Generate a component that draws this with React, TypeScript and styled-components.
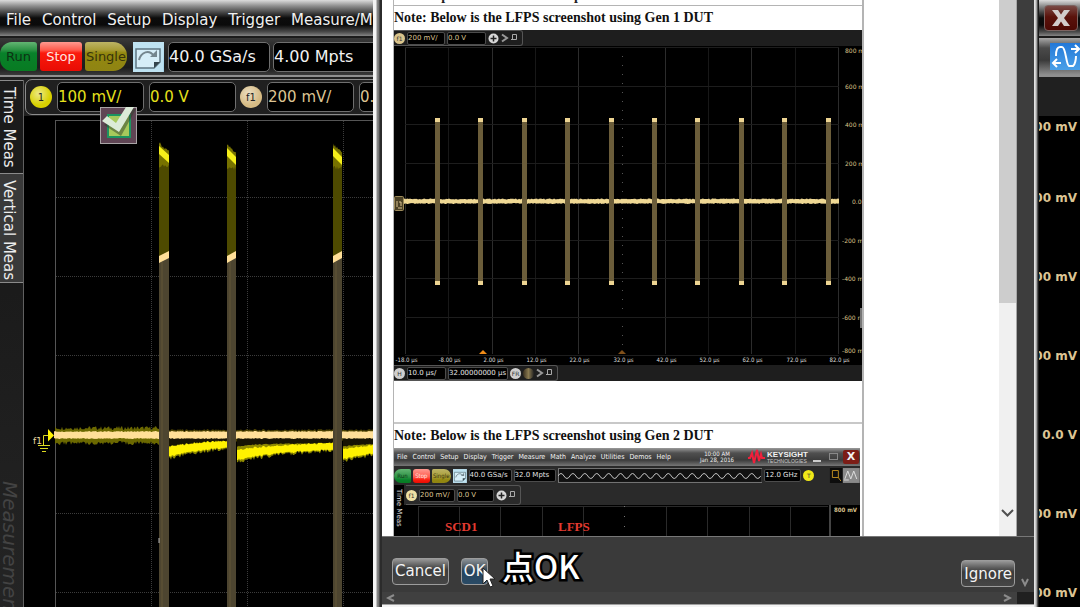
import React from "react";
import styled, { createGlobalStyle, css } from "styled-components";

const Global = createGlobalStyle`
  * { box-sizing: border-box; }
  html, body, #root { height: 100%; }
  body {
    margin: 0;
    overflow: hidden;
    background: #000;
    font-family: "DejaVu Sans", Verdana, sans-serif;
    font-size: 15px;
  }
  button { font-family: inherit; margin: 0; padding: 0; border: 0; background: none; cursor: pointer; white-space: nowrap; }
`;

const TAN = "#dcc493";
const YELLOW = "#e6e01c";

/* ---------- oscilloscope window ---------- */

const Scope = styled.main`
  position: relative;
  display: flex;
  flex-direction: column;
  height: 100vh;
  overflow: hidden;
  background: #000;
`;

const TitleBar = styled.header`
  display: flex;
  flex: none;
  align-items: center;
  justify-content: space-between;
  height: 38px;
  padding: 0 2px 0 6px;
  border-bottom: 2px solid #1c1c1c;
  background: linear-gradient(#dcdcdc 0, #8e8e8e 6px, #4a4a4a 12px, #0c0c0c 18px, #0a0a0a 25px, #4c4c4c 32px, #858585 36px);
`;

const Menu = styled.nav`
  display: flex;
  gap: 11px;
  padding-top: 3px;
`;

const MenuItem = styled.button`
  color: #f0f0f0;
  font-size: 15px;
  line-height: 20px;
`;

const CloseButton = styled.button`
  width: 34px;
  height: 26px;
  border: 1px solid #7d6461;
  border-radius: 4px;
  background: linear-gradient(#7a4a45, #5a120b 45%, #4c0904);
  svg { display: block; margin: auto; }
`;

const Toolbar = styled.div`
  display: flex;
  flex: none;
  align-items: center;
  height: 39px;
  border-bottom: 2px solid #8f8f8f;
  background: linear-gradient(#3a3a3a, #262626 30%, #1d1d1d 80%, #3a3a3a);
`;

const RunControls = styled.div`
  display: flex;
  gap: 3px;
  margin-right: 6px;
`;

const tones = {
  run: css`color: #0c3313; background: linear-gradient(#63b573 0, #2c9244 8px, #08812a 11px, #087b22 100%); border-radius: 12px 3px 3px 12px;`,
  stop: css`color: #ffe6e0; background: linear-gradient(#ff9a90 0, #ff5a4c 8px, #fb1a0c 11px, #e80c04 100%); border-radius: 3px;`,
  single: css`color: #37330a; background: linear-gradient(#bdb465 0, #a89c36 8px, #93880f 11px, #8f8413 100%); border-radius: 3px 14px 14px 3px;`,
};

const RunButton = styled.button<{ $tone: keyof typeof tones }>`
  ${(p) => tones[p.$tone]}
  width: ${(p) => (p.$tone === "run" ? 37 : 42)}px;
  height: 29px;
  font-size: 13px;
`;

const ToolIcon = styled.button`
  width: 31px;
  height: 30px;
  margin-right: 4px;
  background: linear-gradient(135deg, #d9f0fa, #a5d3e8);
  svg { display: block; }
`;

const Readout = styled.button<{ $tone?: string; $size?: number; $width: number }>`
  flex: none;
  width: ${(p) => p.$width}px;
  height: 30px;
  margin-right: 3px;
  border: 1px solid #6f6f6f;
  border-radius: 5px;
  background: #000;
  color: ${(p) => p.$tone ?? "#f2f2f2"};
  font-size: ${(p) => p.$size ?? 16}px;
  text-align: left;
`;

const WavePreview = styled.div`
  flex: 1;
`;

const ZoomTools = styled.div`
  display: flex;
  align-self: stretch;
  align-items: center;
  justify-content: flex-end;
  width: 60px;
  background: linear-gradient(#a8a8a8, #4a4a4a 10px, #3a3a3a 60%, #909090);
`;

const WaveButton = styled.button`
  width: 30px;
  height: 27px;
  background: linear-gradient(#2378d8, #4aa0e8);
  svg { display: block; }
`;

const Body = styled.div`
  display: flex;
  flex: 1;
  min-height: 0;
  background: #202020;
`;

const SideTabs = styled.aside`
  display: flex;
  flex: none;
  flex-direction: column;
  width: 24px;
  margin-top: 3px;
  border-right: 1px solid #606060;
  background: linear-gradient(#151515, #242424);
`;

const SideTab = styled.button<{ $height: number; $active?: boolean }>`
  flex: none;
  width: 23px;
  height: ${(p) => p.$height}px;
  padding: 6px 5px 6px 0;
  border-top: 1px solid #8a8a8a;
  border-bottom: ${(p) => (p.$active ? "1px solid #8a8a8a" : "0")};
  background: ${(p) => (p.$active ? "#393939" : "#1b1b1b")};
  color: #ececec;
  font-size: 15px;
  line-height: 18px;
  text-align: left;
  writing-mode: vertical-rl;
`;

const SideTitle = styled.div`
  margin-top: 198px;
  width: 20px;
  color: #434343;
  font-size: 20px;
  font-style: italic;
  line-height: 20px;
  writing-mode: vertical-rl;
`;

const Workspace = styled.div`
  display: flex;
  flex: 1;
  flex-direction: column;
  min-width: 0;
`;

const ChannelBar = styled.div`
  display: flex;
  flex: none;
  align-items: center;
  height: 36px;
  margin: 2px 60px 0 1px;
  padding-left: 4px;
  border: 1px solid #8c8c8c;
  border-radius: 7px;
  background: #202020;
`;

const Channel = styled.div`
  display: flex;
  align-items: center;
  gap: 2px;
  margin-right: 1px;
`;

const ChannelBadge = styled.button<{ $tone: string }>`
  width: 22px;
  height: 22px;
  margin: 0 3px 0 0;
  border-radius: 50%;
  background: radial-gradient(circle at 40% 35%, #fff8 0, #fff0 60%), ${(p) => p.$tone};
  color: #222;
  font-size: 10px;
`;

const PlotArea = styled.div`
  display: flex;
  flex: 1;
  min-height: 0;
  margin-top: 1px;
  background: #000;
`;

const Plot = styled.svg`
  display: block;
  flex: 1;
  min-width: 0;
  height: 100%;
`;

const Scale = styled.div`
  display: flex;
  flex: none;
  flex-direction: column;
  width: 64px;
  padding: 1px 3px 0 0;
  overflow: hidden;
  color: ${TAN};
  font-size: 12px;
  font-weight: bold;
  text-align: right;
`;

const ScaleLabel = styled.span<{ $first?: boolean }>`
  flex: none;
  height: ${(p) => (p.$first ? 42 : 79)}px;
  line-height: ${(p) => (p.$first ? 20 : 79)}px;
`;

const CheckBadge = styled.svg`
  position: absolute;
  left: 100px;
  top: 106px;
`;

/* ---------- dialog ---------- */

const Dialog = styled.section`
  position: absolute;
  top: 0;
  right: 41px;
  bottom: 0;
  left: 373px;
  display: grid;
  grid-template-columns: 9px 1fr 5px;
`;

const EdgeLeft = styled.div`
  background: linear-gradient(90deg, #f4f4f4 0 3px, #8d8d8d 4px, #6f6f6f 6px, #2b2b2b 7px 9px);
`;

const EdgeRight = styled.div`
  background: linear-gradient(90deg, #e2e2e2 0 1px, #b5b5b5 2px, #8a8a8a 3px, #1a1a1a 4px);
`;

const DialogInner = styled.div`
  display: flex;
  flex-direction: column;
  min-width: 0;
  height: 100vh;
  background: #3a3a3a;
`;

const Viewer = styled.div`
  display: flex;
  flex: 1;
  min-height: 0;
`;

const Page = styled.article`
  flex: 1;
  min-width: 0;
  padding-left: 11px;
  overflow: hidden;
  background: #fff;
`;

const Sheet = styled.div`
  width: 471px;
  border-left: 1px solid #b4b4b4;
  border-right: 2px solid #b4b4b4;
`;

const ClippedRow = styled.p`
  display: flex;
  align-items: flex-end;
  height: 6px;
  margin: 0;
  overflow: hidden;
  border-bottom: 1px solid #b4b4b4;
  color: #222;
  font: bold 14px/18px "Liberation Serif", "Times New Roman", serif;
`;

const Heading = styled.h2`
  height: 24px;
  margin: 0;
  color: #111;
  font: bold 14px/24px "Liberation Serif", "Times New Roman", serif;
  white-space: nowrap;
`;

const Gap = styled.div`
  height: 43px;
  border-bottom: 2px solid #c8c8c8;
`;

const Scroller = styled.div`
  display: flex;
  flex: none;
  flex-direction: column;
  width: 18px;
  border-right: 1px solid #a8a8a8;
  background: #f0f0f0;
`;

const Thumb = styled.div`
  flex: 0 1 303px;
  background: #cdcdcd;
`;

const ScrollArrow = styled.button`
  margin-top: auto;
  height: 46px;
  svg { display: block; margin: auto; }
`;

const Gutter = styled.div`
  flex: none;
  width: 17px;
  background: #3d3d3d;
`;

const Footer = styled.footer`
  display: flex;
  flex: none;
  align-items: center;
  gap: 12px;
  height: 56px;
  padding: 13px 0 0 10px;
  border-top: 1px solid #777;
`;

const DialogButton = styled.button<{ $focus?: boolean }>`
  height: 27px;
  padding: 0 2px;
  border: 1px solid #9c9c9c;
  border-radius: 4px;
  background: ${(p) =>
    p.$focus
      ? "linear-gradient(#8b9298, #4f5a63 8px, #25435c 12px, #2a4b66)"
      : "linear-gradient(#989898, #5a5a5a 7px, #3b3b3b 11px, #464646)"};
  color: #f4f4f4;
  font-size: 15px;
`;

const FooterEnd = styled.div`
  display: flex;
  align-items: flex-end;
  gap: 5px;
  height: 32px;
  margin-left: auto;
  padding-right: 4px;
  color: #999;
`;

const HScroll = styled.div`
  display: flex;
  flex: none;
  justify-content: space-between;
  height: 12px;
  padding: 1px 22px 0 4px;
  background: linear-gradient(90deg, #404040 calc(100% - 17px), #202020 calc(100% - 17px));
`;

const BottomEdge = styled.div`
  flex: none;
  height: 3px;
  border-top: 1px solid #a0a0a0;
  background: #f4f4f4;
`;

const Pointer = styled.svg`
  position: absolute;
  left: 482px;
  bottom: 18px;
`;

const Caption = styled.p`
  position: absolute;
  left: 502px;
  bottom: 19px;
  margin: 0;
  color: #fff;
  font: 500 32px/46px "Noto Sans CJK SC", sans-serif;
  -webkit-text-stroke: 5px #000;
  paint-order: stroke fill;
`;

/* ---------- figures inside the document ---------- */

const Figure = styled.figure<{ $width?: number; $tone?: string }>`
  display: block;
  width: ${(p) => (p.$width ? `${p.$width}px` : "auto")};
  margin: 0;
  overflow: hidden;
  background: ${(p) => p.$tone ?? "#1e1e1e"};
  color: #e4e4e4;
  font-size: 7px;
  line-height: 11px;
  white-space: nowrap;
  svg { display: block; }
`;

const MiniBar = styled.div<{ $height: number; $pad?: number }>`
  display: flex;
  align-items: center;
  gap: 2px;
  height: ${(p) => p.$height}px;
  padding-left: ${(p) => p.$pad ?? 0}px;
`;

const MiniGroup = styled.div`
  display: flex;
  align-items: center;
  gap: 2px;
  height: 100%;
  padding-right: 3px;
  border: 1px solid #555;
  border-left: 0;
  border-radius: 0 3px 3px 0;
`;

const MiniField = styled.span<{ $width: number; $tone?: string }>`
  flex: none;
  width: ${(p) => p.$width}px;
  height: 13px;
  border: 1px solid #4c4c4c;
  border-radius: 2px;
  background: #000;
  color: ${(p) => p.$tone ?? "#e4e4e4"};
  line-height: 11px;
`;

const MiniBadge = styled.span<{ $tone: string }>`
  flex: none;
  width: 11px;
  height: 11px;
  border-radius: 50%;
  background: ${(p) => p.$tone};
  color: #333;
  font-size: 6px;
  text-align: center;
`;

const MiniTitle = styled.div`
  display: flex;
  align-items: center;
  height: 18px;
  padding: 0 1px 0 3px;
  background: linear-gradient(#9a9a9a, #505050 5px, #3c3c3c 12px, #777);
  color: #f2f2f2;
  font-family: "DejaVu Sans Condensed", "DejaVu Sans", sans-serif;
`;

const MiniMenu = styled.div`
  display: flex;
  gap: 5px;
  width: 295px;
`;

const MiniDate = styled.div`
  width: 50px;
  font-size: 6px;
  line-height: 6px;
  text-align: center;
`;

const MiniBrand = styled.div`
  display: flex;
  align-items: center;
  gap: 2px;
  width: 63px;
  margin-left: 6px;
`;

const BrandName = styled.div`
  font: bold 8px/8px "Liberation Sans", sans-serif;
  small { display: block; font-size: 5px; line-height: 5px; font-weight: normal; color: #c8c8c8; }
`;

const MiniClose = styled.span`
  width: 16px;
  height: 14px;
  margin-left: auto;
  border-radius: 2px;
  background: #7c1d16;
  font: bold 11px/14px "DejaVu Sans", sans-serif;
  text-align: center;
`;

const MiniRun = styled.span<{ $tone: keyof typeof tones }>`
  ${(p) => tones[p.$tone]}
  width: ${(p) => (p.$tone === "single" ? 19 : 17)}px;
  height: 14px;
  font: 6px/14px "DejaVu Sans Condensed", "DejaVu Sans", sans-serif;
  text-align: center;
`;

const MiniLower = styled.div`
  display: grid;
  grid-template-columns: 10px 1fr;
`;

const MiniSide = styled.span`
  padding-top: 4px;
  background: #000;
  line-height: 10px;
  writing-mode: vertical-rl;
`;

/* ---------- drawings ---------- */

const noise = (i: number) => {
  const v = Math.sin(i * 12.9898) * 43758.5453;
  return v - Math.floor(v);
};

/* Ragged horizontal band between two edge functions. */
const band = (x0: number, x1: number, top: (x: number) => number, bottom: (x: number) => number, rough: number) => {
  const up: string[] = [];
  const down: string[] = [];
  for (let x = x0; x <= x1; x += 1) {
    up.push(`${x} ${(top(x) - noise(x) * rough).toFixed(1)}`);
    down.unshift(`${x} ${(bottom(x) + noise(x + 500) * rough).toFixed(1)}`);
  }
  return `M${up.join("L")}L${down.join("L")}Z`;
};

const BURSTS = [
  { x: 159, w: 10, top: 150 },
  { x: 227, w: 9, top: 152 },
  { x: 333, w: 9, top: 152 },
];
const DECAYS = [
  { from: 168, to: 227, y: 453, k: 40 },
  { from: 237, to: 333, y: 456, k: 52 },
  { from: 343, to: 400, y: 455, k: 52 },
];

const ScopePlot = () => (
  <Plot role="img" aria-label="Live waveform">
    <g transform="translate(-24 -116)">
      <path d="M55.5 120V900M55 120.5H1010" stroke="#555" fill="none" />
      <path
        d="M151.5 121V900M247.5 121V900M343.5 121V900M56 197.5H1010M56 276.5H1010M56 355.5H1010M56 513.5H1010M56 592.5H1010"
        stroke="#3c3c3c"
        strokeDasharray="1 1"
        fill="none"
      />
      <path d={band(55, 159, () => 430, () => 441, 4)} fill="#6b6800" />
      <path d={band(159, 400, () => 431, () => 440, 2)} fill="#4a4100" />
      {DECAYS.map((d) => (
        <g key={d.from}>
          <path
            d={band(d.from, d.to, () => 438, (x) => d.y + 4 - 13 * (1 - Math.exp((d.from - x) / d.k)), 4)}
            fill="#8f8a00"
          />
          <path d={band(d.from, d.to, () => 438, (x) => 443 + 3 * Math.exp((d.from - x) / 20), 1)} fill="#171403" />
          <path
            d={band(
              d.from,
              d.to,
              (x) => d.y - 5 - 8 * (1 - Math.exp((d.from - x) / d.k)),
              (x) => d.y + 3 - 12 * (1 - Math.exp((d.from - x) / d.k)),
              2,
            )}
            fill="#fff200"
          />
        </g>
      ))}
      <path d={band(54, 400, () => 432, () => 438, 1)} fill="#ffdf98" />
      {BURSTS.map((b) => (
        <g key={b.x}>
          <rect x={b.x} y={b.top} width={b.w} height="108" fill="#4e4a00" />
          <path d={band(b.x, b.x + b.w, (x) => b.top - 5 + (x - b.x) * 0.9, () => b.top + 14, 4)} fill="#777200" />
          <path d={`M${b.x} ${b.top - 4}l${b.w} 9v8l${-b.w} -9z`} fill="#f5ef1a" />
          <rect x={b.x} y="256" width={b.w} height="700" fill="#4d4530" />
          <rect x={b.x + 2} y="262" width="2" height="700" fill="#574d33" />
          <path d={`M${b.x} 256l${b.w} -5v7l${-b.w} 5z`} fill="#ffdf98" />
        </g>
      ))}
      <path d="M159 538v5" stroke="#bbb" />
      <path d="M48 429l6 6.500-6 6z" fill="#fff200" />
      <path d="M43.500 445v-9.500h5M38 445.500h12M40 448.500h8M42 451.500h4" stroke="#ded820" fill="none" />
      <text x="33" y="444" fontSize="9" fill="#ead9a0">f1</text>
    </g>
  </Plot>
);

const CheckIcon = () => (
  <CheckBadge width="38" height="38" viewBox="0 0 38 38" role="img" aria-label="Checked">
    <rect x="0.500" y="1.500" width="36" height="36" fill="#5f4554" stroke="#a9a4a6" />
    <rect x="8" y="9" width="22" height="22" fill="#a6c95c" stroke="#1c9460" strokeWidth="2" />
    <path d="M3 18l7-5 7 7L27 2h8L20 29z" transform="translate(1 1)" fill="#30402a" opacity=".5" />
    <path d="M2 15l5-5 9 7L26 1h8L19 26z" fill="#dcebd8" />
  </CheckBadge>
);

const AutoIcon = ({ size }: { size: number }) => (
  <svg width={size} height={size} viewBox="0 0 30 30" aria-hidden="true">
    <rect width="30" height="30" fill="#bfe3f2" />
    <path d="M3 7h24v13l-6 6H3z" fill="#d6eef8" stroke="#5f7782" strokeWidth="1.500" />
    <path d="M21 26v-6h6z" fill="#33444c" />
    <path d="M6 18c2-8 10-11 15-4" fill="none" stroke="#74868e" strokeWidth="2" />
    <path d="M17 15h7V8z" fill="#74868e" />
  </svg>
);

const PlusIcon = () => (
  <svg width="11" height="11" viewBox="0 0 11 11" aria-hidden="true">
    <circle cx="5.500" cy="5.500" r="5" fill="#d8d8d8" />
    <path d="M5.500 2.500v6M2.500 5.500h6" stroke="#222" strokeWidth="1.500" />
  </svg>
);

const PinIcon = () => (
  <svg width="8" height="10" viewBox="0 0 8 10" aria-hidden="true">
    <path d="M1.500 1.500h4v5h-4zM0 6.500h3" fill="none" stroke="#aaa" />
  </svg>
);

const MoreIcon = () => (
  <svg width="8" height="10" viewBox="0 0 8 10" aria-hidden="true">
    <path d="M1 1.500l5 3.500-5 3.500" fill="none" stroke="#999" strokeWidth="2" />
  </svg>
);

const Chevron = ({ d, width = 10, height = 10, stroke = "#8c8c8c" }: { d: string; width?: number; height?: number; stroke?: string }) => (
  <svg width={width} height={height} viewBox={`0 0 ${width} ${height}`} aria-hidden="true">
    <path d={d} fill="none" stroke={stroke} strokeWidth="2" />
  </svg>
);

const TIMES = ["-18.0", "-8.00", "2.00", "12.0", "22.0", "32.0", "42.0", "52.0", "62.0", "72.0", "82.0"];
const VOLTS = ["800 mV", "600 mV", "400 mV", "200 mV", "0.0 V", "-200 mV", "-400 mV", "-600 mV", "-800 mV"];

const Gen1Plot = () => (
  <svg width="468" height="319" viewBox="0 0 468 319" role="img" aria-label="LFPS bursts, Gen 1">
    <rect width="468" height="319" fill="#000" />
    {TIMES.map((t, i) => {
      const x = Math.round(12 + i * 43.3) - 0.5;
      return (
        <g key={t}>
          <path d={`M${x} 1V308`} stroke={i === 5 ? "#555" : i % 2 ? "#181818" : "#2c2c2c"} strokeDasharray={i === 5 ? "1 8" : undefined} />
          <text x={x + 1} y="316" fontSize="6" textAnchor="middle" fill="#ddd" fontFamily="DejaVu Sans Condensed">
            {t} µs
          </text>
        </g>
      );
    })}
    {VOLTS.map((v, i) => {
      const y = Math.round(1 + i * 38.5) + 0.5;
      return (
        <g key={v}>
          <path d={`M11 ${y}H445`} stroke="#1d1d1d" />
          <text x={i === 4 ? 458 : i > 4 ? 448 : 451} y={i === 0 ? 7 : i === 8 ? 307 : y + 2} fontSize="6" fill="#dcc48a">
            {v}
          </text>
        </g>
      );
    })}
    <path d={band(8, 445, () => 153.500, () => 157, 1)} fill="#efd894" />
    {TIMES.slice(1).map((t, i) => {
      const x = Math.round(43 + i * 43.4) - 2;
      return (
        <g key={t}>
          <rect x={x} y="72" width="5" height="166" fill="#6b5d3a" />
          <rect x={x} y="72" width="5" height="4" fill="#edd492" />
          <rect x={x} y="235" width="5" height="4" fill="#edd492" />
        </g>
      );
    })}
    <rect x="0.500" y="150.500" width="9" height="14" rx="1" fill="#4b4125" stroke="#9c8a5a" />
    <path d="M3 155v6M5 156h2v4M4 162h4" stroke="#dcc493" fill="none" />
    <path d="M85 308l4-4 4 4z" fill="#f08c18" />
    <path d="M224 308l4-4 4 4z" fill="#80501a" />
    <rect x="466" y="262" width="3" height="20" fill="#777" />
  </svg>
);

const sine = (count: number) => {
  let d = "M0 8";
  for (let i = 0; i < count; i += 1) d += "q3 -5 6 0t6 0";
  return d;
};

const Gen1Figure = () => (
  <Figure>
    <MiniBar $height={16}>
      <MiniGroup>
        <MiniBadge $tone="#d9c48c">f1</MiniBadge>
        <MiniField $width={38} $tone={TAN}>200 mV/</MiniField>
        <MiniField $width={39} $tone={TAN}>0.0 V</MiniField>
        <PlusIcon />
        <MoreIcon />
        <PinIcon />
      </MiniGroup>
    </MiniBar>
    <Gen1Plot />
    <MiniBar $height={16}>
      <MiniGroup>
        <MiniBadge $tone="#cfcfcf">H</MiniBadge>
        <MiniField $width={39}>10.0 µs/</MiniField>
        <MiniField $width={60}>32.00000000 µs</MiniField>
        <MiniBadge $tone="#cfcfcf">FR</MiniBadge>
        <MiniBadge $tone="linear-gradient(90deg, #3a3020, #8a7a50 50%, #222)" />
        <MoreIcon />
        <PinIcon />
      </MiniGroup>
    </MiniBar>
  </Figure>
);

const GEN2_MENU = ["File", "Control", "Setup", "Display", "Trigger", "Measure", "Math", "Analyze", "Utilities", "Demos", "Help"];

const Gen2Figure = () => (
  <Figure $width={466} $tone="#2a2a2a">
    <MiniTitle>
      <MiniMenu>
        {GEN2_MENU.map((m) => (
          <span key={m}>{m}</span>
        ))}
      </MiniMenu>
      <MiniDate>
        10:00 AM
        <br />
        Jan 28, 2016
      </MiniDate>
      <MiniBrand>
        <svg width="17" height="16" viewBox="0 0 17 16" aria-hidden="true">
          <path d="M0 9h2l2-5 2 10L9 1l2 11 2-7 1 4h3" fill="none" stroke="#f0203c" strokeWidth="2" />
        </svg>
        <BrandName>
          KEYSIGHT
          <small>TECHNOLOGIES</small>
        </BrandName>
      </MiniBrand>
      <svg width="30" height="12" viewBox="0 0 30 12" aria-hidden="true">
        <path d="M2 10h8" stroke="#ccc" strokeWidth="2" />
        <rect x="18.500" y="2.500" width="8" height="6" fill="none" stroke="#888" />
      </svg>
      <MiniClose>X</MiniClose>
    </MiniTitle>
    <MiniBar $height={19}>
      <MiniRun $tone="run">Run</MiniRun>
      <MiniRun $tone="stop">Stop</MiniRun>
      <MiniRun $tone="single">Single</MiniRun>
      <AutoIcon size={14} />
      <MiniField $width={43}>40.0 GSa/s</MiniField>
      <MiniField $width={42}>32.0 Mpts</MiniField>
      <svg width="206" height="15" viewBox="0 0 206 15" aria-hidden="true">
        <rect x="0.500" y="0.500" width="205" height="14" fill="#111" stroke="#777" />
        <path d={sine(17)} stroke="#c8c8c8" fill="none" />
      </svg>
      <MiniField $width={37}>12.0 GHz</MiniField>
      <MiniBadge $tone="#f0e818">T</MiniBadge>
      <svg width="44" height="15" viewBox="0 0 44 15" aria-hidden="true">
        <rect x="14" width="13" height="15" fill="#0d0d0d" />
        <path d="M16.500 2.500h6v7h-6zM22 9l3 4" fill="none" stroke="#b98a20" />
        <rect x="27" width="17" height="15" fill="#8a8a8a" />
        <path d="M29 11l3-8 3 8 3-8 3 8M28 12h5" fill="none" stroke="#ddd" />
      </svg>
    </MiniBar>
    <MiniLower>
      <MiniSide>Time Meas</MiniSide>
      <div>
        <MiniBar $height={20} $pad={2}>
          <MiniGroup>
            <MiniBadge $tone="#efe0a4">f1</MiniBadge>
            <MiniField $width={36} $tone={TAN}>200 mV/</MiniField>
            <MiniField $width={37} $tone={TAN}>0.0 V</MiniField>
            <PlusIcon />
            <PinIcon />
          </MiniGroup>
        </MiniBar>
        <svg width="456" height="60" viewBox="0 0 456 60" role="img" aria-label="LFPS bursts, Gen 2">
          <rect width="456" height="60" fill="#000" />
          <path d="M14.500 1V60M14 1.500H424M55.500 1V60M96.500 1V60M138.500 1V60M179.500 1V60M262.500 1V60M303.500 1V60M345.500 1V60M386.500 1V60" stroke="#2a2a2a" fill="none" />
          <path d="M220.500 1V60" stroke="#777" strokeDasharray="1 9" />
          <path d="M426 0V60" stroke="#444" strokeWidth="2" />
          <g fill="#e23a30" fontFamily="Liberation Serif" fontWeight="bold" fontSize="13">
            <text x="41" y="26">SCD1</text>
            <text x="154" y="26">LFPS</text>
          </g>
          <text x="430" y="7" fontSize="6" fontWeight="bold" fill="#d8c08c" fontFamily="DejaVu Sans Condensed">800 mV</text>
        </svg>
      </div>
    </MiniLower>
  </Figure>
);

const MENU = ["File", "Control", "Setup", "Display", "Trigger", "Measure/Mark"];
const SCALE = ["800 mV", "600 mV", "400 mV", "200 mV", "0.0 V", "-200 mV", "-400 mV"];

export default function App() {
  return (
    <>
      <Global />
      <Scope>
        <TitleBar>
          <Menu>
            {MENU.map((m) => (
              <MenuItem key={m}>{m}</MenuItem>
            ))}
          </Menu>
          <CloseButton aria-label="Close">
            <svg width="20" height="16" viewBox="0 0 20 16">
              <path d="M1 0h6l3 4.500L13 0h6l-6 8 6 8h-6l-3-4.500L7 16H1l6-8z" fill="#d2cccb" />
            </svg>
          </CloseButton>
        </TitleBar>

        <Toolbar>
          <RunControls>
            <RunButton $tone="run">Run</RunButton>
            <RunButton $tone="stop">Stop</RunButton>
            <RunButton $tone="single">Single</RunButton>
          </RunControls>
          <ToolIcon aria-label="Auto scale">
            <AutoIcon size={30} />
          </ToolIcon>
          <Readout $width={102}>40.0 GSa/s</Readout>
          <Readout $width={110}>4.00 Mpts</Readout>
          <WavePreview />
          <ZoomTools>
            <WaveButton aria-label="Horizontal scale">
              <svg width="30" height="27" viewBox="0 0 30 27" fill="none" stroke="#fff" strokeWidth="2">
                <path d="M6 13c0-4 1-9 4-9h2c4 0 4 18 7 19h4c2-1 3-7 3-10" />
                <path d="M21 6h8M25 2l4 4-4 4M11 20H4M7 16l-4 4 4 4" />
              </svg>
            </WaveButton>
          </ZoomTools>
        </Toolbar>

        <Body>
          <SideTabs>
            <SideTab $height={93}>Time Meas</SideTab>
            <SideTab $height={110} $active>Vertical Meas</SideTab>
            <SideTitle>Measurements</SideTitle>
          </SideTabs>
          <Workspace>
            <ChannelBar>
              <Channel>
                <ChannelBadge $tone="#d8d000">1</ChannelBadge>
                <Readout $width={87} $size={15} $tone={YELLOW}>100 mV/</Readout>
                <Readout $width={87} $size={15} $tone={YELLOW}>0.0 V</Readout>
              </Channel>
              <Channel>
                <ChannelBadge $tone="#d6bb84">f1</ChannelBadge>
                <Readout $width={87} $size={15} $tone={TAN}>200 mV/</Readout>
                <Readout $width={87} $size={15} $tone={TAN}>0.0 V</Readout>
              </Channel>
            </ChannelBar>
            <PlotArea>
              <ScopePlot />
              <Scale>
                {SCALE.map((s, i) => (
                  <ScaleLabel key={s} $first={i === 0}>{s}</ScaleLabel>
                ))}
              </Scale>
            </PlotArea>
          </Workspace>
        </Body>
        <CheckIcon />

        <Dialog role="dialog" aria-label="Connection notes">
          <EdgeLeft />
          <DialogInner>
            <Viewer>
              <Page>
                <Sheet>
                  <ClippedRow>Test output of the transmitter port</ClippedRow>
                  <Heading>Note: Below is the LFPS screenshot using Gen 1 DUT</Heading>
                  <Gen1Figure />
                  <Gap />
                  <Heading>Note: Below is the LFPS screenshot using Gen 2 DUT</Heading>
                  <Gen2Figure />
                </Sheet>
              </Page>
              <Scroller>
                <Thumb />
                <ScrollArrow aria-label="Scroll down">
                  <Chevron d="M1 2l5.500 5.500L12 2" width={13} height={10} stroke="#505050" />
                </ScrollArrow>
              </Scroller>
              <Gutter />
            </Viewer>
            <Footer>
              <DialogButton>Cancel</DialogButton>
              <DialogButton $focus>OK</DialogButton>
              <FooterEnd>
                <DialogButton>Ignore</DialogButton>
                <Chevron d="M2 2l3 6 3-6" />
              </FooterEnd>
            </Footer>
            <HScroll>
              <Chevron d="M8 2L2 5l6 3" />
              <Chevron d="M2 2l6 3-6 3" />
            </HScroll>
            <BottomEdge />
          </DialogInner>
          <EdgeRight />
        </Dialog>

        <Pointer width="14" height="22" viewBox="0 0 14 22" aria-hidden="true">
          <path d="M1 1v16l4-4 3 7 3-1-3-7h5z" fill="#fff" stroke="#222" strokeWidth="1" />
        </Pointer>
        <Caption lang="zh">点OK</Caption>
      </Scope>
    </>
  );
}
